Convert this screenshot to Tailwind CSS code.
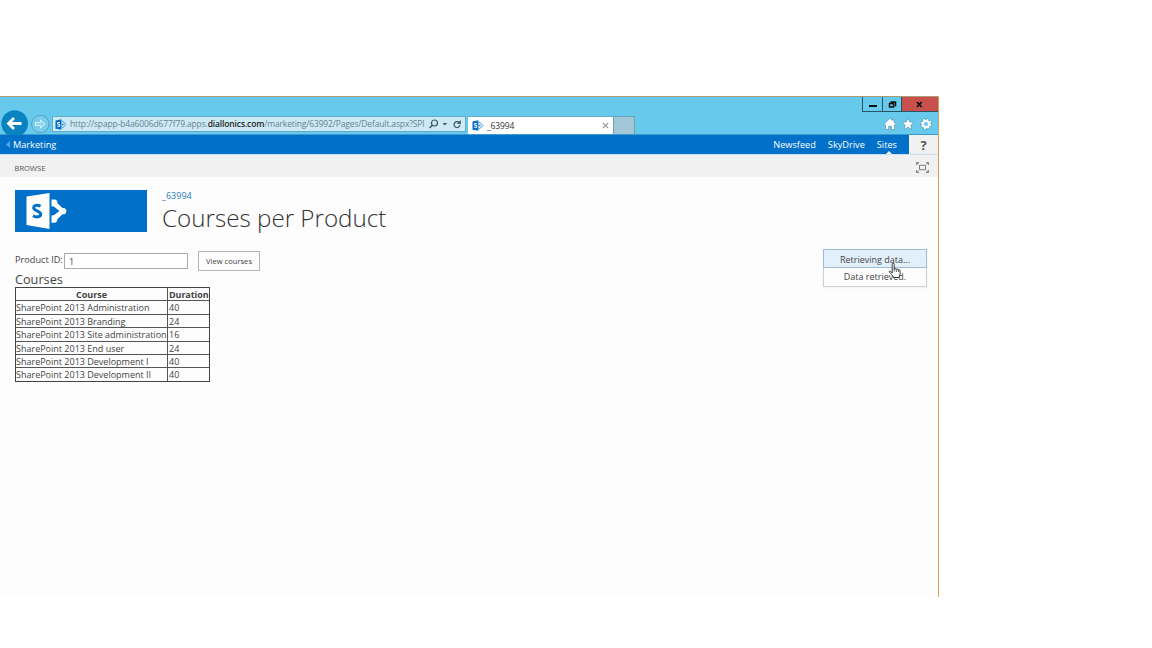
<!DOCTYPE html>
<html lang="en">
<head>
<meta charset="utf-8">
<title>Courses per Product</title>
<script src="https://cdn.jsdelivr.net/npm/@tailwindcss/browser@4"></script>
</head>
<body class="h-[648px] w-[1152px] overflow-hidden bg-white pt-24 font-['Open_Sans','Noto_Sans',sans-serif] text-[#444]">
<svg class="hidden">
  <symbol id="sp" viewBox="0 0 12 12"><path fill="#0871c4" d="M0 1.5 6.5.3v11.4L0 10.5z"/><path d="M7 2.500h1l3.300 3.500-3.300 3.500H7" fill="none" stroke="#2f8fd0" stroke-width="1"/><circle cx="8" cy="6" r="1" fill="#2f8fd0"/><path d="M4.700 4.100C3.500 3.500 2.200 3.800 2.300 4.800c.1 1.100 2.400.9 2.400 2.200 0 1.100-1.500 1.300-2.700.7" fill="none" stroke="#fff" stroke-width="1.100"/></symbol>
</svg>
<div class="flex h-[501px] w-[939px] flex-col border-r border-[#d9a04c] bg-[#fdfdfd]">
  <header class="flex h-[39px] shrink-0 flex-col border-t border-b border-t-[#a99d78] border-b-[#3d9bc9] bg-[#67caec]">
    <div class="flex h-[15px] shrink-0 justify-end">
      <div class="flex h-[15px] w-[76px] border-b border-l border-[#27566a] text-[#111]">
        <div class="flex w-5 items-center justify-center border-r border-[#27566a]"><svg class="h-[13px] w-[18px]" viewBox="0 0 18 13"><path d="M5 8h8" stroke="currentColor" stroke-width="2"/></svg></div>
        <div class="flex w-[19px] items-center justify-center border-r border-[#27566a]"><svg class="h-[13px] w-[18px]" viewBox="0 0 18 13"><path d="M7.500 4h5v4.500M6.500 5.500h4v3.500h-4z" fill="none" stroke="currentColor" stroke-width="1.500"/></svg></div>
        <div class="flex flex-1 items-center justify-center bg-[#c7504c]"><svg class="h-[13px] w-[18px]" viewBox="0 0 18 13"><path d="m6 4 4.600 5M10.600 4 6 9" stroke="currentColor" stroke-width="1.800"/></svg></div>
      </div>
    </div>
    <div class="flex min-h-0 flex-1 items-end">
      <svg class="-mb-px h-[25px] w-[52px] shrink-0" viewBox="0 0 52 25">
        <circle cx="14.700" cy="13.500" r="13.300" fill="#0a83c1"/>
        <path d="M21.500 13.500H8.500M14 8l-5.500 5.500L14 19" fill="none" stroke="#fff" stroke-width="2.800"/>
        <circle cx="40.300" cy="14" r="8.700" fill="#78cdea" stroke="#4da5c8"/>
        <path d="M35.500 12.500h5V10l4.500 4-4.500 4v-2.500h-5z" fill="#8bd4ed" stroke="#e3f6fc" stroke-width=".9"/>
      </svg>
      <div class="mb-[2px] flex h-4 w-[414px] shrink-0 items-center border border-[#65abc6] bg-[#cdebf7] pl-[2px]">
        <svg class="h-[11px] w-[12px] shrink-0"><use href="#sp"/></svg>
        <div class="ml-[3px] w-[356px] shrink-0 text-[8.500px] leading-[14px] tracking-[-0.140px] whitespace-nowrap text-[#6b8089]">http://spapp-b4a6006d677f79.apps.<span class="font-semibold text-[#222]">diallonics.com</span>/marketing/63992/Pages/Default.aspx?SPI</div>
        <svg class="ml-[2px] h-[14px] w-[36px] shrink-0" viewBox="0 0 36 14" fill="none" stroke="#41545c"><circle cx="6.500" cy="6" r="3" stroke-width="1.200"/><path d="M4.300 8.300 1.500 11" stroke-width="1.500"/><path d="M14.500 6h4.600l-2.300 2.600z" fill="#41545c" stroke="none"/><path d="M31.700 6.200A3 3 0 1 0 32 8" stroke-width="1.200"/><path d="M32.800 3v4h-4z" fill="#41545c" stroke="none"/></svg>
      </div>
      <div class="ml-[2px] flex h-[18px] w-[145px] shrink-0 items-center border-t border-[#65abc6] bg-white pl-[4px]">
        <svg class="h-[11px] w-[12px] shrink-0"><use href="#sp"/></svg>
        <span class="ml-[3px] text-[8.500px] leading-[14px] tracking-[-0.140px] text-[#333]">_63994</span>
        <svg class="mr-[4px] ml-auto h-[7px] w-[7px]" viewBox="0 0 7 7"><path d="m.8.8 5.400 5.400M6.200.8.8 6.200" stroke="#969696" stroke-width="1.200"/></svg>
      </div>
      <div class="h-[18px] w-[22px] shrink-0 border border-b-0 border-[#67a5bd] bg-[#a2c6d5]"></div>
      <svg class="mr-[5px] mb-[3px] ml-auto h-[14px] w-[50px]" viewBox="0 0 50 14" fill="#fff" stroke="#4d87a0" stroke-width=".6">
        <path d="M7 1.300.9 7.200l1 1 .6-.5v4.900h3.200V9.200h2.600v3.400h3.200V7.700l.6.5 1-1-2.200-2.100V2.500H9.300v1z"/>
        <path d="m25 .9 1.700 4 4.400.4-3.300 2.900 1 4.300-3.800-2.300-3.800 2.300 1-4.300-3.300-2.900 4.400-.4z"/>
        <path fill="none" stroke="#4d87a0" stroke-width="3.100" stroke-dasharray="2.300 1.038" d="M47.250 7a4.250 4.250 0 1 1-8.500 0 4.250 4.250 0 0 1 8.500 0"/>
        <path fill="none" stroke="#fff" stroke-width="2.200" stroke-dasharray="1.800 1.538" d="M47.250 7a4.250 4.250 0 1 1-8.500 0 4.250 4.250 0 0 1 8.500 0"/><circle cx="43" cy="7" r="3" fill="none" stroke="#fff" stroke-width="1.800"/>
      </svg>
    </div>
  </header>
  <nav class="flex h-[19px] shrink-0 bg-[#0170c9] text-[9.200px] leading-[20px] text-white">
    <svg class="mt-[6px] ml-[6px] h-[7px] w-[4px]" viewBox="0 0 4 7"><path d="M4 0v7L0 3.500z" fill="#5ba3dd"/></svg>
    <span class="ml-[3px]">Marketing</span>
    <div class="ml-auto flex">
      <span class="mr-[12px]">Newsfeed</span><span class="mr-[12px]">SkyDrive</span>
      <span class="relative mr-[12px]">Sites<svg class="absolute bottom-0 left-[9px] h-[3px] w-[6px]" viewBox="0 0 6 3"><path d="m0 3 3-3 3 3z" fill="#f1f1f1"/></svg></span>
      <span class="w-[29px] bg-[#f1f1f1] text-center text-[13px] font-bold text-[#555]">?</span>
    </div>
  </nav>
  <div class="flex h-[23px] shrink-0 items-center border-t border-[#c9e0f1] bg-[#f1f1f1] pr-[9px] pl-[14.500px]">
    <span class="mt-[4px] text-[7.600px] leading-[12px] text-[#555]">BROWSE</span>
    <svg class="mt-[2px] ml-auto h-[11px] w-[13px]" viewBox="0 0 13 11" fill="none" stroke="#707070" stroke-width=".9"><path d="M3.500 3.300h6v4.400h-6zM.6 3V.6H3M10 .6h2.400V3M.6 8v2.400H3M10 10.400h2.400V8M.6.6l1.800 1.600M12.400.6l-1.800 1.600M.6 10.400l1.800-1.600M12.400 10.400l-1.800-1.600"/></svg>
  </div>
  <section class="flex h-[72px] shrink-0 pt-[13px] pl-[15px]">
    <div class="h-[42px] w-[132px] shrink-0 bg-[#0170c9]">
      <svg class="h-[42px] w-[60px]" viewBox="0 0 60 42"><path fill="#fff" d="M11.500 6.500 34.500 3v36L11.500 35z"/><path d="M25.500 16.300c-3-1.700-6.800-1.200-6.800 1.500 0 3.300 7 2.700 7 6.500 0 3-4.500 3.300-7.700 1.500" fill="none" stroke="#0170c9" stroke-width="3"/><path fill="#fff" d="M36.500 9.500H39a3 3 0 0 1 3.400 3.700l5 4.800a3.200 3.200 0 1 1 0 6.200l-5 5a3 3 0 0 1-3.400 3.500h-2.500V25.500l2.300-.2 5.600-4.300-5.600-4.500-2.300-.3z"/><path fill="#0170c9" d="m36 18 2.800-1 5 4.100-5 4-2.800-.8z"/></svg>
    </div>
    <div class="pl-[15px]">
      <div class="text-[9px] leading-[12px] text-[#1c7cba]">_63994</div>
      <h1 class="mt-px text-[24.200px] leading-[30px] font-light text-[#333]">Courses per Product</h1>
    </div>
  </section>
  <main class="flex items-start justify-between pr-[11px] pl-[15px]">
    <div>
      <div class="flex h-[21px] items-center">
        <label class="w-[49px] text-[9.200px] leading-[16px] whitespace-nowrap">Product ID:</label>
        <div class="mt-[2px] h-[16px] w-[124px] border border-[#ababab] bg-white pl-[4px] text-[9px] leading-[15px]">1</div>
        <button class="mt-[2px] ml-[10px] h-[20px] w-[62px] border border-[#b5b5b5] bg-[#fdfdfd] text-[7.600px] leading-[18px] whitespace-nowrap">View courses</button>
      </div>
      <h2 class="mt-[2px] text-[12.700px] leading-[15px]">Courses</h2>
      <div class="grid w-[195px] grid-cols-[152px_41px] grid-rows-[13px_14px_13px_14px_13px_13px_13px] border border-[#444] text-[9px] leading-[14px] whitespace-nowrap [&>*]:border-b [&>*]:border-[#555] [&>*:nth-child(even)]:pl-px [&>*:nth-child(odd)]:border-r [&>*:nth-last-child(-n+2)]:border-b-0">
        <b class="text-center">Course</b><b class="tracking-[-0.100px]">Duration</b>
        <span>SharePoint 2013 Administration</span><span>40</span>
        <span>SharePoint 2013 Branding</span><span>24</span>
        <span>SharePoint 2013 Site administration</span><span>16</span>
        <span>SharePoint 2013 End user</span><span>24</span>
        <span>SharePoint 2013 Development I</span><span>40</span>
        <span>SharePoint 2013 Development II</span><span>40</span>
      </div>
    </div>
    <div class="relative w-[104px] border border-[#d0d0d0] text-center text-[9px] leading-[19px] shadow-xs">
      <div class="-m-px h-[19px] border border-[#9fbcd8] bg-[#e2f0fb]">Retrieving data...</div>
      <div class="h-[19px] leading-[20px]">Data retrieved.</div>
      <svg class="absolute top-[12px] left-[64px] h-[18px] w-[14px]" viewBox="0 0 14 18"><path d="M4.200 11V2.200c0-1.500 2-1.500 2 0v5c.2-1 2-1 2.100.3.300-.9 2-.8 2.100.5.400-.7 1.700-.4 1.700.8V12c0 1.500-.8 2.300-1 3.500H5.500C5 13.700 3 12 1.500 10.200.7 9 2.200 8.200 4.200 11z" fill="#fff" stroke="#222" stroke-width=".9"/><path d="M6.200 7v2.500M8.300 7.500V10M10.400 8v2" stroke="#222" stroke-width=".7"/></svg>
    </div>
  </main>
</div>
</body>
</html>
